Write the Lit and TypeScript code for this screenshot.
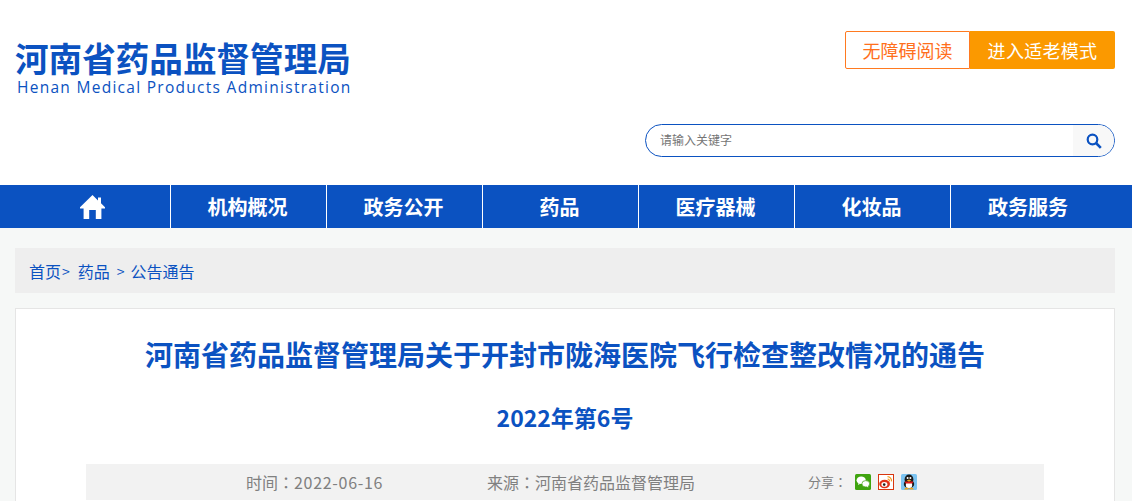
import { LitElement, html, css } from "lit";
import { customElement } from "lit/decorators.js";

@customElement("app-root")
export class AppRoot extends LitElement {
  static styles = css`
    :host {
      display: block;
      height: 501px;
      overflow: hidden;
      background: #f6f8f7;
      font-family: "Noto Sans CJK SC", "Liberation Sans", sans-serif;
    }
    .header {
      background: #fff;
      height: 185px;
      padding: 31px 17px 0 15px;
      box-sizing: border-box;
      display: flex;
      justify-content: space-between;
    }
    .logo { padding-top: 8px; color: #0b52c1; }
    .logo-cn { font-size: 33.6px; font-weight: 700; line-height: 38px; white-space: nowrap; }
    .logo-en {
      font-family: "Open Sans", sans-serif;
      font-size: 15.5px;
      line-height: 18px;
      letter-spacing: 1.28px;
      padding-left: 2px;
      margin-top: 1px;
      white-space: nowrap;
    }
    .tools { display: flex; flex-direction: column; align-items: flex-end; }
    .btns { display: flex; height: 38px; font-size: 18px; }
    .btn {
      box-sizing: border-box;
      display: flex;
      align-items: center;
      justify-content: center;
      height: 38px;
    }
    .btn-a {
      width: 125px;
      color: #ff6f1c;
      background: #fff;
      border: 1px solid #ff7a20;
      border-radius: 2px 0 0 2px;
    }
    .btn-b {
      width: 145px;
      color: #fff;
      background: #fb9900;
      border-radius: 0 2px 2px 0;
      letter-spacing: 0.3px;
    }
    .search {
      margin-top: 55px;
      width: 470px;
      height: 33px;
      box-sizing: border-box;
      border: 1px solid #0b52c1;
      border-radius: 17px;
      display: flex;
      align-items: center;
      justify-content: space-between;
      overflow: hidden;
      background: #fff;
    }
    .placeholder { padding: 0 0 2px 14px; font-size: 12px; color: #757575; }
    .sbtn {
      width: 41px;
      height: 31px;
      background: #f8f8f8;
      display: flex;
      align-items: center;
      justify-content: center;
    }
    .nav { background: #0b52c1; height: 43px; padding-left: 15px; display: flex; }
    .nav-item {
      box-sizing: border-box;
      width: 156px;
      height: 43px;
      padding-right: 2px;
      display: flex;
      align-items: center;
      justify-content: center;
      color: #fff;
      font-size: 20px;
      font-weight: 700;
      border-right: 1px solid #fff;
    }
    .nav-item:last-child { border-right: 0; }
    .home-icon { margin-left: 2px; }
    .main { padding: 20px 17px 0 15px; }
    .crumb {
      height: 45px;
      background: #eeeeee;
      padding-left: 14px;
      display: flex;
      align-items: center;
      font-size: 16px;
      color: #0b52c1;
      white-space: pre;
    }
    .sep { font-size: 14px; }
    .sep-a { margin: 0 8px 0 1px; }
    .sep-b { margin: 0 6px 0 7px; }
    .card {
      margin-top: 15px;
      background: #fff;
      border: 1px solid #e5e5e5;
      height: 240px;
      box-sizing: border-box;
      padding: 0 70px;
    }
    h1 {
      margin: 26px 0 0;
      text-align: center;
      color: #0b52c1;
      font-size: 28px;
      line-height: 38px;
      font-weight: 700;
    }
    h2 {
      margin: 28px 0 0;
      text-align: center;
      color: #0b52c1;
      font-size: 23px;
      line-height: 32px;
      font-weight: 700;
    }
    .meta {
      margin-top: 31px;
      height: 36px;
      background: #f2f2f2;
      color: #808080;
      display: flex;
      align-items: center;
      font-size: 16px;
      padding-left: 160px;
      white-space: nowrap;
    }
    .time { width: 241px; }
    .src { width: 321px; }
    .colon { font-family: "Noto Sans CJK TC", sans-serif; }
    .num { letter-spacing: 0.7px; }
    .share { display: flex; align-items: center; font-size: 13px; gap: 7px; }
    .share svg { display: block; }
    .share-label { width: 40px; padding-bottom: 1px; }
  `;

  render() {
    return html`
      <div class="header">
        <div class="logo">
          <div class="logo-cn">河南省药品监督管理局</div>
          <div class="logo-en">Henan Medical Products Administration</div>
        </div>
        <div class="tools">
          <div class="btns">
            <div class="btn btn-a">无障碍阅读</div>
            <div class="btn btn-b">进入适老模式</div>
          </div>
          <div class="search">
            <span class="placeholder">请输入关键字</span>
            <span class="sbtn">
              <svg width="16" height="16" viewBox="0 0 16 16" fill="none" stroke="#0b52c1">
                <circle cx="6.5" cy="6.5" r="4.8" stroke-width="2.2"></circle>
                <path d="M10 10l4.8 4.8" stroke-width="2.6"></path>
              </svg>
            </span>
          </div>
        </div>
      </div>
      <div class="nav">
        <div class="nav-item">
          <svg class="home-icon" width="25" height="24" viewBox="0 0 25 24" fill="#fff">
            <path d="M12.5 0L0 12.2V13.4h3.6V24h5.6V15h6.6v9h5.6V13.4H25v-1.2l-4-3.9V2.6h-3v2.8z"></path>
          </svg>
        </div>
        <div class="nav-item">机构概况</div>
        <div class="nav-item">政务公开</div>
        <div class="nav-item">药品</div>
        <div class="nav-item">医疗器械</div>
        <div class="nav-item">化妆品</div>
        <div class="nav-item">政务服务</div>
      </div>
      <div class="main">
        <div class="crumb"><span>首页</span><span class="sep sep-a">&gt;</span><span>药品</span><span class="sep sep-b">&gt;</span><span>公告通告</span></div>
        <div class="card">
          <h1>河南省药品监督管理局关于开封市陇海医院飞行检查整改情况的通告</h1>
          <h2>2022年第6号</h2>
          <div class="meta">
            <span class="time">时间<span class="colon">：</span><span class="num">2022-06-16</span></span>
            <span class="src">来源<span class="colon">：</span>河南省药品监督管理局</span>
            <span class="share">
              <span class="share-label">分享<span class="colon">：</span></span>
              <svg width="16" height="16" viewBox="0 0 16 16">
                <rect width="16" height="16" rx="1.5" fill="#3fa40f"></rect>
                <ellipse cx="6.2" cy="6.2" rx="4.6" ry="3.8" fill="#fff"></ellipse>
                <path d="M3.5 9l-.5 2 2.2-1.2z" fill="#fff"></path>
                <ellipse cx="10.8" cy="9.8" rx="3.9" ry="3.2" fill="#fff" stroke="#3fa40f" stroke-width=".7"></ellipse>
                <path d="M12.8 12l.5 1.6-2-1z" fill="#fff"></path>
              </svg>
              <svg width="16" height="16" viewBox="0 0 16 16">
                <rect x=".5" y=".5" width="15" height="15" fill="#fff" stroke="#d8360f"></rect>
                <ellipse cx="6.6" cy="10" rx="5.4" ry="4.2" fill="#e0321a"></ellipse>
                <ellipse cx="6.4" cy="10.4" rx="3" ry="2.4" fill="#fff"></ellipse>
                <circle cx="6.2" cy="10.6" r="1.3" fill="#222"></circle>
                <path d="M9.5 2.6a4.2 4.2 0 0 1 4 4.8M9.6 5a2.2 2.2 0 0 1 1.9 2.4" fill="none" stroke="#f39a1c" stroke-width="1.2"></path>
              </svg>
              <svg width="16" height="16" viewBox="0 0 16 16">
                <rect width="16" height="16" rx="1.5" fill="#7cc4f2"></rect>
                <ellipse cx="8" cy="5.6" rx="4.4" ry="5" fill="#1a1a1a"></ellipse>
                <ellipse cx="8" cy="10" rx="5.2" ry="4.4" fill="#1a1a1a"></ellipse>
                <ellipse cx="8" cy="11" rx="3.2" ry="3.2" fill="#fff"></ellipse>
                <path d="M3.6 7.6h8.8l-1 2H4.6z" fill="#e01b1b"></path>
                <path d="M5.6 6.4l2.4-.9 2.4.9-2.4 1z" fill="#f2a51b"></path>
                <circle cx="6.6" cy="4" r="1" fill="#fff"></circle>
                <circle cx="9.4" cy="4" r="1" fill="#fff"></circle>
                <path d="M3 15.4h4.4v-1.6H4.4zM8.6 15.4H13l-1.4-1.6H8.6z" fill="#f2a51b"></path>
              </svg>
            </span>
          </div>
        </div>
      </div>
    `;
  }
}
